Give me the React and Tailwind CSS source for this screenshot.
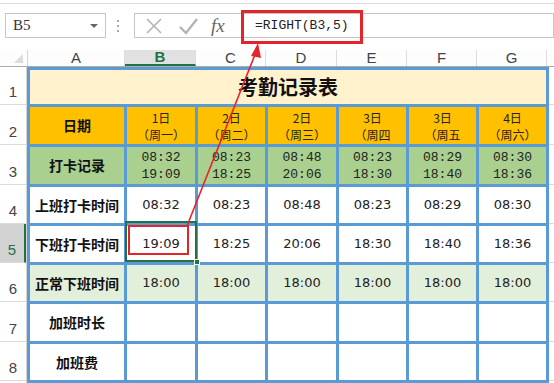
import React from "react";

const cols = ["A", "B", "C", "D", "E", "F", "G"];
const colWidths = ["w-[97px]", "w-[71px]", "w-[70px]", "w-[71px]", "w-[70px]", "w-[70px]", "w-[70px]"];
const rowHeights = ["h-[38px]", "h-[40px]", "h-[40px]", "h-[39px]", "h-[39px]", "h-[39px]", "h-[40px]", "h-[39px]"];

const days = [
  ["1日", "（周一）"],
  ["2日", "（周二）"],
  ["2日", "（周三）"],
  ["3日", "（周四"],
  ["3日", "（周五"],
  ["4日", "（周六）"],
];
const punches = [
  ["08:32", "19:09"],
  ["08:23", "18:25"],
  ["08:48", "20:06"],
  ["08:23", "18:30"],
  ["08:29", "18:40"],
  ["08:30", "18:36"],
];

const cjk = { fontFamily: '"Noto Sans CJK SC", sans-serif' };
const mono = { fontFamily: '"Liberation Mono", "Noto Sans CJK SC", monospace' };
const tahoma = { fontFamily: '"DejaVu Sans", sans-serif' };

const Label = ({ children, className = "" }) => (
  <div className={`flex items-center justify-center font-bold text-[14px] text-[#111] ${className}`} style={cjk}>
    {children}
  </div>
);

const Time = ({ children, className = "bg-white" }) => (
  <div className={`flex items-center justify-center text-[13px] text-[#222] ${className}`} style={tahoma}>
    {children}
  </div>
);

export default function App() {
  return (
    <div className="relative w-[554px] h-[383px] overflow-hidden bg-white" style={{ fontFamily: '"Liberation Sans", sans-serif' }}>
      {/* formula toolbar */}
      <div className="h-[47px] border-t border-[#dadada] mt-[3px] relative">
        <div className="absolute left-[5px] top-[9px] w-[101px] h-[25px] border border-[#c6c6c6] flex items-center justify-between px-[7px]">
          <span className="text-[15px] text-[#333]" style={{ fontFamily: '"Liberation Serif", serif' }}>B5</span>
          <span className="w-0 h-0 border-l-[4px] border-r-[4px] border-t-[4px] border-l-transparent border-r-transparent border-t-[#666]" />
        </div>
        <div className="absolute left-[117px] top-[16px] flex flex-col gap-[3px]">
          <span className="w-[2px] h-[2px] bg-[#aaa]" />
          <span className="w-[2px] h-[2px] bg-[#aaa]" />
          <span className="w-[2px] h-[2px] bg-[#aaa]" />
        </div>
        <div className="absolute left-[134px] top-[9px] w-[108px] h-[25px] border border-[#c6c6c6] flex items-center">
          <svg width="20" height="20" viewBox="0 0 20 20" className="ml-[9px]">
            <path d="M3 3 L17 17 M17 3 L3 17" stroke="#b4b4b4" strokeWidth="1.6" />
          </svg>
          <svg width="22" height="20" viewBox="0 0 22 20" className="ml-[13px]">
            <path d="M3 11 L9 17 L20 3" stroke="#b4b4b4" strokeWidth="2.4" fill="none" />
          </svg>
          <span className="ml-[12px] text-[19px] italic text-[#666] leading-none" style={{ fontFamily: '"Liberation Serif", serif' }}>
            fx
          </span>
        </div>
        <div className="absolute left-[242px] right-0 top-[9px] h-[25px] border border-[#c6c6c6] flex items-center pl-[12px]">
          <span className="text-[13px] text-[#222]" style={mono}>=RIGHT(B3,5)</span>
        </div>
        <div className="absolute left-[241px] top-[6px] w-[122px] h-[34px] border-[3px] border-[#e5232b]" />
      </div>

      {/* column headers */}
      <div className="flex h-[17px] border-b border-[#ababab] bg-[#fdfdfd]">
        <div className="w-[28px] border-r border-[#d4d4d4] relative">
          <span className="absolute right-[4px] bottom-[3px] w-0 h-0" style={{ borderBottom: "9px solid #dcdcdc", borderLeft: "9px solid transparent" }} />
        </div>
        {cols.map((c, i) => (
          <div
            key={c}
            className={`${colWidths[i]} flex items-center justify-center text-[15px] border-r border-[#dcdcdc] ${
              c === "B" ? "bg-[#e1e1e1] text-[#217346] font-bold border-b-2 border-b-[#217346]" : "text-[#444]"
            }`}
          >
            {c}
          </div>
        ))}
        <div className="flex-1" />
      </div>

      {/* body */}
      <div className="flex">
        <div className="w-[27px] flex flex-col border-r border-[#d4d4d4]">
          {rowHeights.map((h, i) => (
            <div
              key={i}
              className={`${h} flex items-end justify-center pb-[1px] text-[15px] border-b border-[#dadada] ${
                i === 4 ? "bg-[#d2d2d2] text-[#217346] border-r-2 border-r-[#217346]" : "text-[#444]"
              }`}
            >
              {i + 1}
            </div>
          ))}
        </div>

        <div className="grid grid-cols-[94px_68px_67px_68px_67px_67px_67px] grid-rows-[34px_37px_37px_36px_36px_36px_37px_36px] gap-[3px] p-[3px] bg-[#5b9bd5]">
          <div className="col-span-7 bg-[#fff2cc] flex items-center justify-center text-[20px] font-bold text-[#111]" style={cjk}>
            考勤记录表
          </div>

          <Label className="bg-[#ffc000]">日期</Label>
          {days.map(([d, w], i) => (
            <div key={i} className="bg-[#ffc000] flex flex-col items-center justify-center text-[12px] leading-[17px] text-[#222] overflow-hidden whitespace-nowrap" style={cjk}>
              <span>{d}</span>
              <span>{w}</span>
            </div>
          ))}

          <Label className="bg-[#a9d08e]">打卡记录</Label>
          {punches.map(([a, b], i) => (
            <div key={i} className="bg-[#a9d08e] flex flex-col items-center justify-center text-[13px] leading-[17px] text-[#222]" style={mono}>
              <span>{a}</span>
              <span>{b}</span>
            </div>
          ))}

          <Label className="bg-white">上班打卡时间</Label>
          {punches.map(([a], i) => (
            <Time key={i}>{a}</Time>
          ))}

          <Label className="bg-white">下班打卡时间</Label>
          {punches.map(([, b], i) => (
            <Time key={i}>{b}</Time>
          ))}

          <Label className="bg-[#e2efda]">正常下班时间</Label>
          {punches.map((_, i) => (
            <Time key={i} className="bg-[#e2efda]">18:00</Time>
          ))}

          <Label className="bg-white">加班时长</Label>
          {punches.map((_, i) => (
            <div key={i} className="bg-white" />
          ))}

          <Label className="bg-white">加班费</Label>
          {punches.map((_, i) => (
            <div key={i} className="bg-white" />
          ))}
        </div>
        <div className="flex-1 flex flex-col">
          {rowHeights.map((h, i) => (
            <div key={i} className={`${h} border-b border-[#dadada]`} />
          ))}
        </div>
      </div>

      {/* selection on B5 */}
      <div className="absolute left-[125px] top-[221px] w-[72px] h-[41px] border-2 border-[#217346]" />
      <div className="absolute left-[194px] top-[259px] w-[6px] h-[6px] bg-[#217346] border border-white" />

      {/* annotation */}
      <div className="absolute left-[128px] top-[225px] w-[61px] h-[30px] border-2 border-[#e5232b]" />
      <svg className="absolute left-0 top-0" width="554" height="383">
        <line x1="187" y1="226" x2="256" y2="52" stroke="#e5232b" strokeWidth="1.6" />
        <polygon points="258,43 251,56 261,58" fill="#e5232b" />
      </svg>
    </div>
  );
}
